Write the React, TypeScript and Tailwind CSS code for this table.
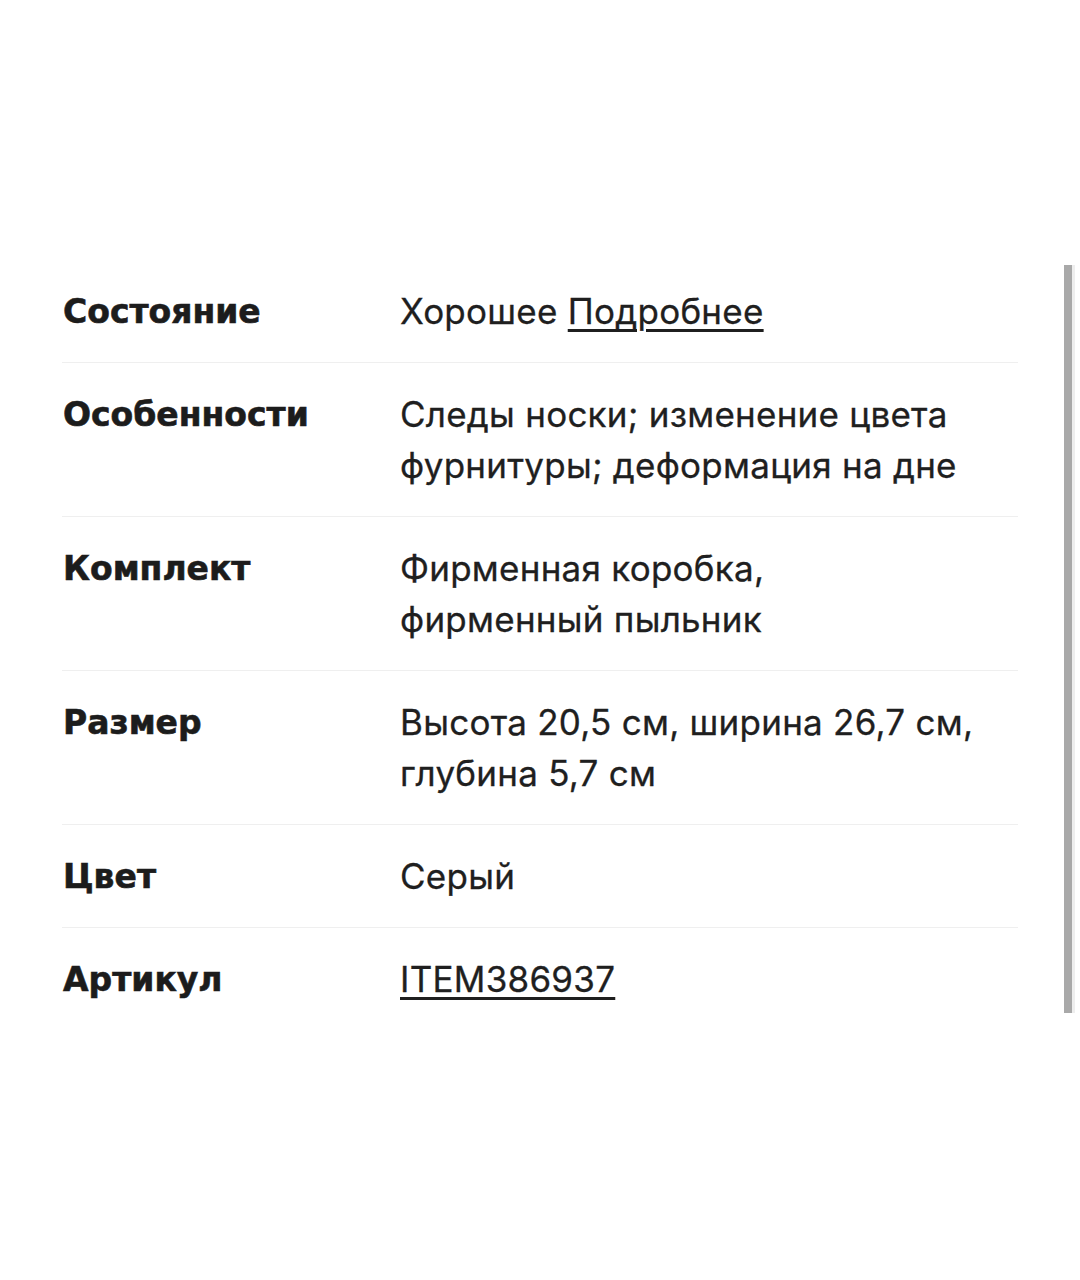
const rows: { label: string; value: React.ReactNode }[] = [
  {
    label: "Состояние",
    value: (
      <>
        Хорошее{" "}
        <span className="underline decoration-[3px] underline-offset-[5px]">Подробнее</span>
      </>
    ),
  },
  {
    label: "Особенности",
    value: (
      <>
        Следы носки; изменение цвета
        <br />
        фурнитуры; деформация на дне
      </>
    ),
  },
  {
    label: "Комплект",
    value: (
      <>
        Фирменная коробка,
        <br />
        фирменный пыльник
      </>
    ),
  },
  {
    label: "Размер",
    value: (
      <>
        Высота 20,5 см, ширина 26,7 см,
        <br />
        глубина 5,7 см
      </>
    ),
  },
  { label: "Цвет", value: "Серый" },
  {
    label: "Артикул",
    value: <span className="underline decoration-[3px] underline-offset-[5px]">ITEM386937</span>,
  },
];

const App = () => {
  return (
    <div className="relative w-[1080px] h-[1280px] bg-white overflow-hidden">
      {/* spec table */}
      <div className="pt-[260px] pl-[62px] w-[1018px]">
        {rows.map((row, i) => (
          <div
            key={row.label}
            className={
              "flex pt-[26px] pb-[25px] " +
              (i < rows.length - 1 ? "border-b border-[#efefef]" : "")
            }
          >
            <div className="w-[338px] shrink-0 pl-px text-[33px] leading-[51px] font-bold text-[#1c1c1c] [-webkit-text-stroke:0.6px_#1c1c1c] font-['DejaVu_Sans',sans-serif]">
              {row.label}
            </div>
            <div className="text-[35px] leading-[51px] tracking-[0.25px] text-[#1f1f1f] [-webkit-text-stroke:0.3px_#1f1f1f] font-['Inter',sans-serif]">
              {row.value}
            </div>
          </div>
        ))}
      </div>

      {/* scrollbar */}
      <div className="absolute left-[1064px] top-[265px] w-[8px] h-[748px] bg-[#a9a9a9]" />
      <div className="absolute left-[1072px] top-[265px] w-[3px] h-[748px] bg-[#eeeeee]" />
    </div>
  );
};

export default App;
